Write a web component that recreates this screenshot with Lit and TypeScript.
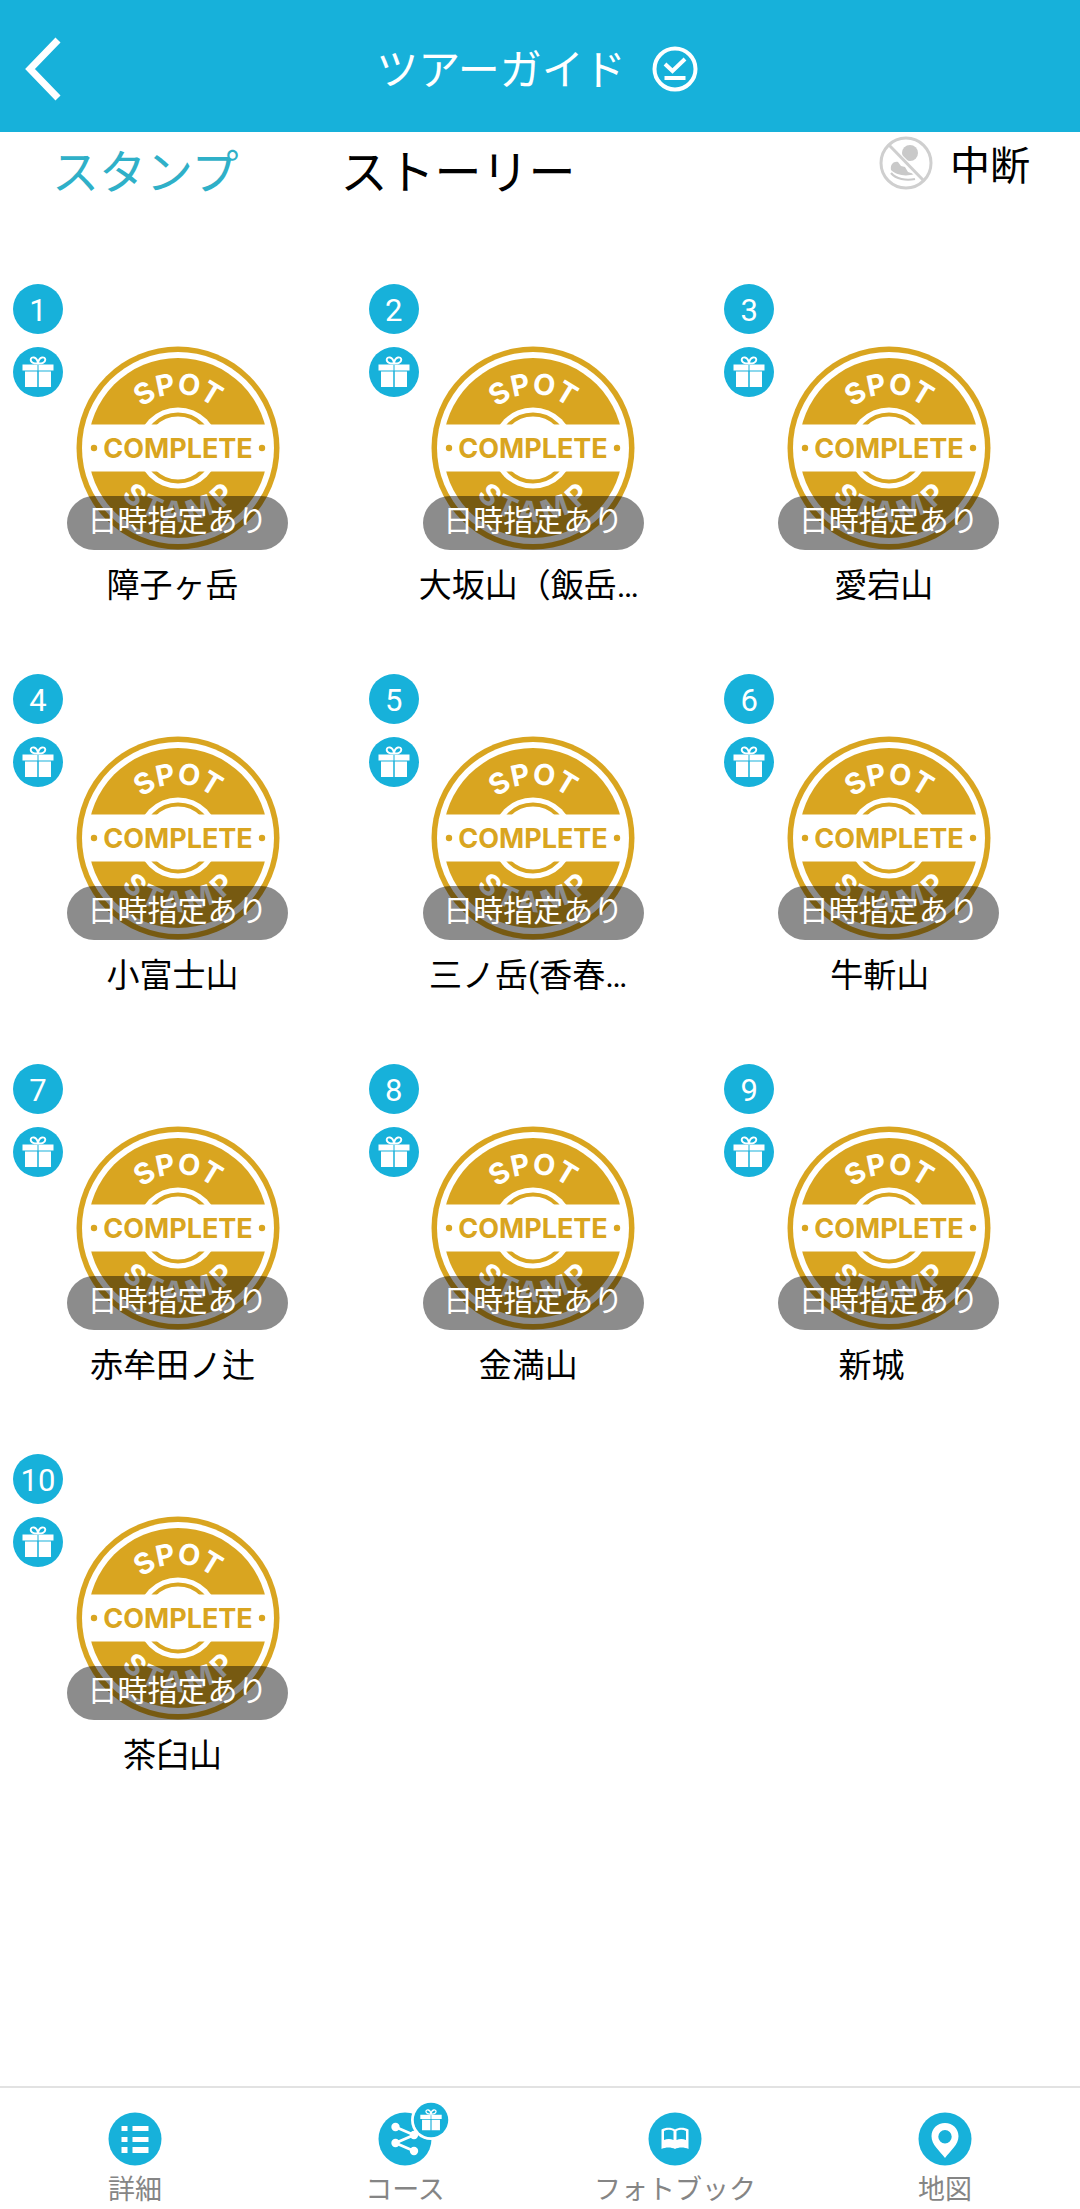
import { LitElement, html, css, svg } from "lit";
import { customElement, property } from "lit/decorators.js";

const SPOTS = [
  "障子ヶ岳",
  "大坂山（飯岳…",
  "愛宕山",
  "小富士山",
  "三ノ岳(香春…",
  "牛斬山\u00a0",
  "赤牟田ノ辻",
  "金満山",
  "新城\u00a0\u00a0\u00a0",
  "茶臼山",
];

const giftShape = svg`
  <path fill="#fff" d="M9.500 17.500h31v6h-31zM12 24.500h12.500v15.500h-12.500zM25.500 24.500h12.500v15.500h-12.500z"/>
  <path stroke="#17b1da" stroke-width="1" d="M25 18v22"/>
  <path fill="none" stroke="#fff" stroke-width="1.900" d="M25 16.300c-3.500.3-7.300-.5-7.300-3.500 0-3.700 6.300-3.600 7.300 3.500zM25 16.300c3.500.3 7.300-.5 7.300-3.500 0-3.700-6.300-3.600-7.300 3.500z"/>`;

/* Letters of the lower arc: advance width in em and angle from straight down. */
const LOWER = [
  { advance: 0.65, angle: 43 },
  { advance: 0.66, angle: 24 },
  { advance: 0.75, angle: 4 },
  { advance: 0.91, angle: -19 },
  { advance: 0.65, angle: -43 },
];
const LOWER_PLACED = LOWER.map(({ advance, angle }) => {
  const a = (angle * Math.PI) / 180;
  const half = (advance * 29) / 2;
  return {
    x: Math.round(-74 * Math.sin(a) - half * Math.cos(a)),
    y: Math.round(74 * Math.cos(a) - half * Math.sin(a)),
    angle,
  };
});

@customElement("spot-stamp")
export class SpotStamp extends LitElement {
  static styles = css`
    :host { display: block; }
    svg { display: block; width: 100%; height: 100%; }
    .mark { font-family: Inter, "Open Sans", sans-serif; font-weight: 700; }
    .centered { text-anchor: middle; }
    .arc { fill: #fff; font-size: 29px; }
    .band { fill: #d9a520; font-size: 27px; }
  `;
  render() {
    return html`<svg viewBox="-102 -102 204 204" aria-hidden="true">
      <defs>
        <path id="upper" d="M-54 0A54 54 0 0 1 54 0" />
      </defs>
      <circle r="101.500" fill="#d9a520" />
      <circle r="96" fill="#fff" />
      <circle r="90" fill="#d9a520" />
      <circle r="40.500" fill="#fff" />
      <circle r="33.500" fill="none" stroke="#d9a520" stroke-width="4" />
      <path fill="#fff" d="M-93-23.500h186v47h-186z" />
      <circle cx="-84" r="3.200" fill="#d9a520" />
      <circle cx="84" r="3.200" fill="#d9a520" />
      <text class="mark centered arc"><textPath href="#upper" startOffset="50%">SPOT</textPath></text>
      <text
        class="mark arc"
        x=${LOWER_PLACED.map((l) => l.x).join(" ")}
        y=${LOWER_PLACED.map((l) => l.y).join(" ")}
        rotate=${LOWER_PLACED.map((l) => l.angle).join(" ")}
      >STAMP</text>
      <text class="mark centered band" y="10">COMPLETE</text>
    </svg>`;
  }
}

@customElement("spot-card")
export class SpotCard extends LitElement {
  @property({ type: Number }) number = 1;
  @property() name = "";

  static styles = css`
    :host { display: block; }
    .card {
      display: grid;
      grid-template-columns: 50px 225px;
      justify-content: start;
      width: 100%;
      padding: 0;
      border: 0;
      background: none;
      color: #000;
      font-family: Roboto, "Noto Sans CJK JP", sans-serif;
      text-align: center;
      cursor: pointer;
    }
    .badges { display: flex; flex-direction: column; gap: 13px; }
    .number {
      height: 50px;
      border-radius: 50%;
      background: #17b1da;
      color: #fff;
      font-size: 31px;
      line-height: 54px;
    }
    .gift { display: block; width: 50px; height: 50px; }
    .stamp { display: grid; justify-items: center; padding: 62px 0 0 4px; }
    .art { grid-area: 1 / 1; width: 204px; height: 204px; }
    .pill {
      grid-area: 1 / 1;
      align-self: end;
      z-index: 1;
      box-sizing: border-box;
      width: 100%;
      height: 54px;
      border-radius: 27px;
      background: rgba(0, 0, 0, 0.45);
      color: #fff;
      font-size: 30px;
      line-height: 50px;
    }
    .name {
      grid-column: 2;
      margin-top: 16px;
      padding-right: 6px;
      font-size: 33px;
      line-height: 40px;
      white-space: nowrap;
    }
  `;
  render() {
    return html`<button class="card" type="button">
      <span class="badges">
        <span class="number">${this.number}</span>
        <svg class="gift" viewBox="0 0 50 50" aria-hidden="true">
          <circle cx="25" cy="25" r="25" fill="#17b1da" />${giftShape}
        </svg>
      </span>
      <span class="stamp">
        <spot-stamp class="art"></spot-stamp>
        <span class="pill">日時指定あり</span>
      </span>
      <span class="name">${this.name}</span>
    </button>`;
  }
}

const NAV = [
  {
    label: "詳細",
    href: "#detail",
    icon: svg`<path fill="#fff" d="M13 14h6v5h-6zM13 25h6v5h-6zM13 35h6v6h-6zM24 14h16v5h-16zM24 25h16v5h-16zM24 35h16v6h-16z"/>`,
    badge: false,
  },
  {
    label: "コース",
    href: "#course",
    icon: svg`<path fill="none" stroke="#fff" stroke-width="2.800" d="M17 15l18.500 8-18.500 8 18.500 8"/>
      <circle cx="17" cy="15" r="4.200" fill="#fff"/><circle cx="35.500" cy="23" r="4.200" fill="#fff"/>
      <circle cx="17" cy="31" r="4.200" fill="#fff"/><circle cx="35.500" cy="39" r="4.200" fill="#fff"/>`,
    badge: true,
  },
  {
    label: "フォトブック",
    href: "#photobook",
    icon: svg`<path fill="#fff" fill-rule="evenodd" d="M13 17.500c4-2.500 10-2.500 13.500 0 3.500-2.500 9.500-2.500 13.500 0v19.500c-4-2-10-2-13.500 0-3.500-2-9.500-2-13.500 0zM15.500 19v9c3-1.500 6.500-1.500 9.500 0v-9c-3-1.800-6.500-1.800-9.500 0zM28 19v9c3-1.500 6.500-1.500 9.500 0v-9c-3-1.800-6.500-1.800-9.500 0z"/>`,
    badge: false,
  },
  {
    label: "地図",
    href: "#map",
    icon: svg`<path fill="#fff" fill-rule="evenodd" d="M26.500 11c-7.700 0-13.500 5.800-13.500 13.200 0 8.500 8 14.300 13.500 21.800 5.500-7.500 13.500-13.300 13.500-21.800 0-7.400-5.800-13.200-13.500-13.200zM26.500 18a6.700 6.700 0 1 1 0 13.400 6.700 6.700 0 0 1 0-13.400z"/>`,
    badge: false,
  },
];

@customElement("app-root")
export class AppRoot extends LitElement {
  static styles = css`
    :host {
      display: flex;
      flex-direction: column;
      min-height: 100vh;
      background: #fff;
      color: #000;
      font-family: Roboto, "Noto Sans CJK JP", sans-serif;
    }
    button { padding: 0; border: 0; background: none; color: inherit; font: inherit; cursor: pointer; }
    svg { display: block; }
    .header {
      display: grid;
      grid-template-columns: 92px 1fr 92px;
      align-items: center;
      height: 126px;
      padding-top: 6px;
      background: #17b1da;
      color: #fff;
    }
    .back { padding: 4px 24px; }
    .back svg { width: 38px; height: 64px; }
    .heading { display: flex; align-items: center; justify-content: center; gap: 26px; padding-right: 6px; }
    .title { margin: 0; padding-top: 4px; font-size: 42px; line-height: 60px; font-weight: 400; }
    .check { width: 46px; height: 46px; }
    .toolbar { display: flex; align-items: flex-start; height: 76px; padding: 0 50px; }
    .tabs { display: flex; gap: 102px; padding: 3px 0 0 2px; font-size: 47px; line-height: 76px; }
    .tab.active { color: #2fb0c8; }
    .pause {
      display: flex;
      align-items: center;
      gap: 17px;
      margin-left: auto;
      font-size: 40px;
      line-height: 54px;
    }
    .pause span { padding-top: 8px; }
    .pause svg { width: 54px; height: 54px; }
    .spots {
      flex: 1;
      display: grid;
      grid-template-columns: repeat(3, 1fr);
      align-content: start;
      row-gap: 68px;
      margin: 0;
      padding: 76px 0 0 13px;
      list-style: none;
    }
    .nav { display: grid; grid-template-columns: repeat(4, 1fr); border-top: 2px solid #e2e2e2; }
    .link {
      display: flex;
      flex-direction: column;
      align-items: center;
      gap: 6px;
      padding-top: 24px;
      color: #858585;
      font-size: 27px;
      line-height: 37px;
      text-decoration: none;
    }
    .icon { position: relative; width: 54px; height: 54px; }
    .icon svg { width: 54px; height: 54px; }
    .icon .reward { position: absolute; left: 33px; top: -12px; width: 40px; height: 40px; }
  `;

  render() {
    return html`
      <header class="header">
        <button class="back" type="button" aria-label="戻る">
          <svg viewBox="0 0 38 64"><path fill="none" stroke="#fff" stroke-width="7" d="M34 3L6 32l28 29" /></svg>
        </button>
        <div class="heading">
          <h1 class="title">ツアーガイド</h1>
          <svg class="check" viewBox="0 0 46 46" aria-hidden="true">
            <circle cx="23" cy="23" r="20.500" fill="none" stroke="#fff" stroke-width="4" />
            <path fill="none" stroke="#fff" stroke-width="4" d="M13 18l7.500 7L33 13M12.500 32h21" />
          </svg>
        </div>
      </header>
      <div class="toolbar">
        <div class="tabs">
          <button class="tab active" type="button">スタンプ</button>
          <button class="tab" type="button">ストーリー</button>
        </div>
        <button class="pause" type="button">
          <svg viewBox="0 0 54 54" aria-hidden="true">
            <circle cx="27" cy="27" r="25" fill="none" stroke="#cfcfcf" stroke-width="3" />
            <circle cx="31" cy="17" r="8" fill="#c9c9c9" />
            <path fill="#c9c9c9" d="M12 34c-1-6 3-9 7-8l3 4 4 1 3 5 6 2c-8 3-18 1-23-4z" />
            <path fill="none" stroke="#c9c9c9" stroke-width="2.200" d="M12 37c5 6 15 8 24 6" />
            <path fill="none" stroke="#fff" stroke-width="6" d="M11 11l32 32" />
            <path fill="none" stroke="#cfcfcf" stroke-width="3" d="M10 9l35 36" />
          </svg>
          <span>中断</span>
        </button>
      </div>
      <ul class="spots">
        ${SPOTS.map((name, i) => html`<li><spot-card .number=${i + 1} .name=${name}></spot-card></li>`)}
      </ul>
      <nav class="nav">
        ${NAV.map(
          (item) => html`<a class="link" href=${item.href}>
            <span class="icon">
              <svg viewBox="0 0 53 54" aria-hidden="true">
                <circle cx="26.500" cy="27" r="26.500" fill="#17b1da" />${item.icon}
              </svg>
              ${item.badge
                ? html`<svg class="reward" viewBox="-4 -4 58 58" aria-hidden="true">
                    <circle cx="25" cy="25" r="29" fill="#fff" />
                    <circle cx="25" cy="25" r="25" fill="#17b1da" />${giftShape}
                  </svg>`
                : ""}
            </span>
            <span>${item.label}</span>
          </a>`
        )}
      </nav>
    `;
  }
}
